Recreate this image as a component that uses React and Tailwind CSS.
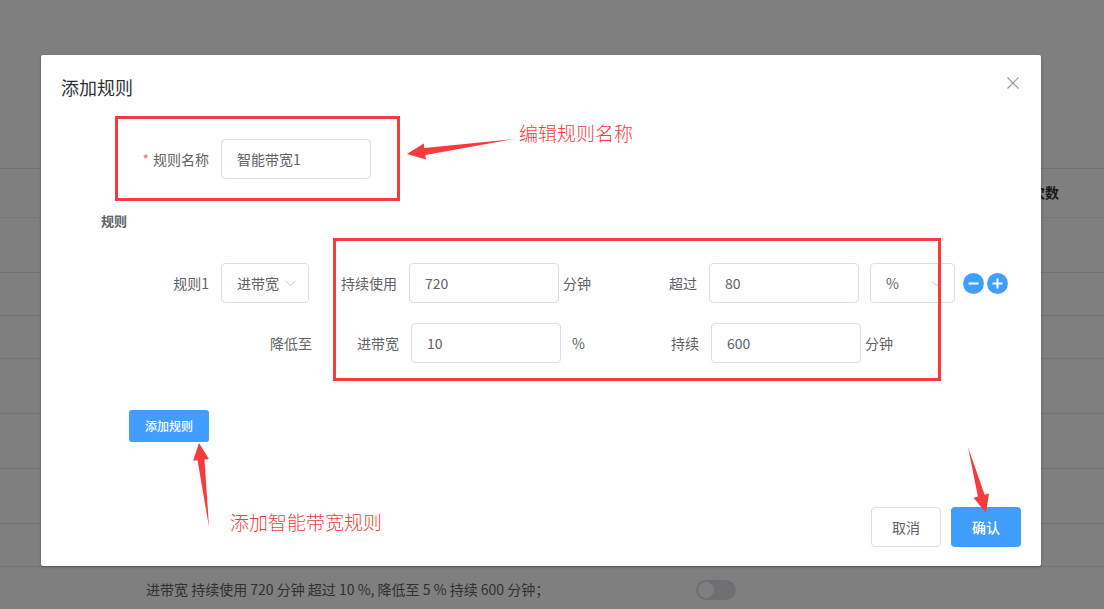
import React from "react";

// tapered arrow: thin tail at (tx,ty), head tip at (px,py)
function arrow(tx, ty, px, py, L = 17, W = 8, w = 3.5) {
  const dx = px - tx;
  const dy = py - ty;
  const len = Math.hypot(dx, dy);
  const ux = dx / len;
  const uy = dy / len;
  const nx = -uy;
  const ny = ux;
  const bx = px - ux * L;
  const by = py - uy * L;
  const pts = [
    [px, py],
    [bx + nx * W, by + ny * W],
    [bx + nx * w, by + ny * w],
    [tx, ty],
    [bx - nx * w, by - ny * w],
    [bx - nx * W, by - ny * W],
  ];
  return pts.map((p) => p.join(",")).join(" ");
}

const Field = ({ value }) => (
  <div className="h-10 w-[150px] shrink-0 rounded-[4px] border border-[#dcdfe6] px-[15px] flex items-center text-[14px] text-[#606266]">
    {value}
  </div>
);

const Select = ({ value, width }) => (
  <div
    className={`h-10 ${width} shrink-0 rounded-[4px] border border-[#dcdfe6] pl-[15px] pr-[12px] flex items-center justify-between text-[14px] text-[#606266]`}
  >
    <span>{value}</span>
    <svg width="11" height="7" viewBox="0 0 11 7">
      <path d="M0.5 0.8 L5.5 5.8 L10.5 0.8" fill="none" stroke="#c0c4cc" strokeWidth="1" />
    </svg>
  </div>
);

const RoundBtn = ({ plus }) => (
  <svg width="21" height="21" viewBox="0 0 21 21">
    <circle cx="10.5" cy="10.5" r="10.5" fill="#409eff" />
    <path d="M5.5 10.5 H15.5" stroke="#fff" strokeWidth="2" />
    {plus && <path d="M10.5 5.5 V15.5" stroke="#fff" strokeWidth="2" />}
  </svg>
);

const BgRow = ({ h, dashed, children }) => (
  <div
    className={`${h} border-t border-[#e4e7ed] ${dashed ? "border-dotted" : ""} flex items-center`}
  >
    {children}
  </div>
);

const App = () => {
  return (
    <div className="relative w-[1104px] h-[609px] overflow-hidden bg-white font-['Noto_Sans_CJK_SC',sans-serif]">
      {/* page underneath */}
      <div className="flex flex-col">
        <div className="h-[168px]" />
        <BgRow h="h-[49px]">
          <span className="ml-[1031px] -mt-[2px] text-[14px] font-bold text-[#303133]">次数</span>
        </BgRow>
        <BgRow h="h-[55px]" dashed />
        <BgRow h="h-[43px]" />
        <BgRow h="h-[43px]" />
        <BgRow h="h-[55px]" />
        <BgRow h="h-[55px]" />
        <BgRow h="h-[55px]" />
        <BgRow h="h-[43px]" />
        <BgRow h="h-[46px]">
          <span className="ml-[146px] w-[550px] text-[14px] text-[#606266]">
            进带宽 持续使用 720 分钟 超过 10 %, 降低至 5 % 持续 600 分钟；
          </span>
          <div className="w-10 h-5 rounded-full bg-[#dcdfe6] flex items-center px-[2px]">
            <div className="w-4 h-4 rounded-full bg-white" />
          </div>
        </BgRow>
      </div>

      {/* mask */}
      <div className="absolute inset-0 bg-black/50" />

      {/* dialog */}
      <div className="absolute left-[41px] top-[55px] w-[1000px] h-[511px] bg-white rounded-[2px] shadow-[0_1px_3px_rgba(0,0,0,0.3)] flex flex-col">
        <div className="pt-5 px-5 pb-2.5">
          <span className="block text-[18px] leading-6 text-[#303133]">添加规则</span>
        </div>
        <svg className="absolute right-[22px] top-[22px]" width="12" height="12" viewBox="0 0 12 12">
          <path d="M0.5 0.5 L11.5 11.5 M11.5 0.5 L0.5 11.5" stroke="#909399" strokeWidth="1.1" />
        </svg>

        <div className="pl-[60px] flex flex-col">
          <div className="mt-[30px] flex items-center">
            <label className="w-[120px] pr-3 text-right text-[14px] text-[#606266]">
              <span className="text-[#f56c6c] mr-1">*</span>规则名称
            </label>
            <Field value="智能带宽1" />
          </div>

          <div className="mt-[32px] text-[13px] leading-5 font-bold text-[#606266]">规则</div>

          <div className="mt-[32px] flex items-center text-[14px] text-[#606266]">
            <label className="w-[120px] pr-3 text-right">规则1</label>
            <Select value="进带宽" width="w-[88px]" />
            <label className="w-[100px] pr-3 text-right">持续使用</label>
            <Field value="720" />
            <span className="w-[60px] pl-1">分钟</span>
            <label className="w-[90px] pr-3 text-right">超过</label>
            <Field value="80" />
            <div className="ml-[11px]">
              <Select value="%" width="w-[85px]" />
            </div>
            <div className="ml-[8px] flex items-center gap-[3px]">
              <RoundBtn />
              <RoundBtn plus />
            </div>
          </div>

          <div className="mt-5 flex items-center text-[14px] text-[#606266]">
            <label className="w-[211px] text-right">降低至</label>
            <label className="w-[99px] pr-3 text-right">进带宽</label>
            <Field value="10" />
            <span className="w-[60px] pl-[11px]">%</span>
            <label className="w-[90px] pr-3 text-right">持续</label>
            <Field value="600" />
            <span className="pl-1">分钟</span>
          </div>

          <button className="mt-[47px] ml-[28px] w-20 h-8 rounded-[3px] bg-[#409eff] text-[12px] font-medium text-white">
            添加规则
          </button>
        </div>

        <div className="mt-auto flex justify-end gap-2.5 px-5 pb-[19px]">
          <button className="w-[70px] h-10 rounded-[4px] border border-[#dcdfe6] bg-white text-[14px] text-[#606266]">
            取消
          </button>
          <button className="w-[70px] h-10 rounded-[4px] bg-[#409eff] text-[14px] font-medium text-white">
            确认
          </button>
        </div>
      </div>

      {/* annotations */}
      <svg className="absolute inset-0 pointer-events-none" width="1104" height="609" viewBox="0 0 1104 609">
        <rect x="116.5" y="117.5" width="282" height="82" fill="none" stroke="#f53b3b" strokeWidth="3" />
        <rect x="334.5" y="239.5" width="605" height="140" fill="none" stroke="#f53b3b" strokeWidth="3" />
        <polygon points={arrow(514, 139, 407, 154, 18, 8, 3.5)} fill="#f53b3b" />
        <polygon points={arrow(209, 527, 199, 443, 17, 8, 3.5)} fill="#f53b3b" />
        <polygon points={arrow(968, 447, 986, 513, 18, 8, 3.5)} fill="#f53b3b" />
      </svg>
      <span className="absolute left-[519px] top-[120px] text-[19px] leading-[26px] font-light text-[#f53b3b]">
        编辑规则名称
      </span>
      <span className="absolute left-[230px] top-[509px] text-[19px] leading-[26px] font-light text-[#f53b3b]">
        添加智能带宽规则
      </span>
    </div>
  );
};

export default App;
